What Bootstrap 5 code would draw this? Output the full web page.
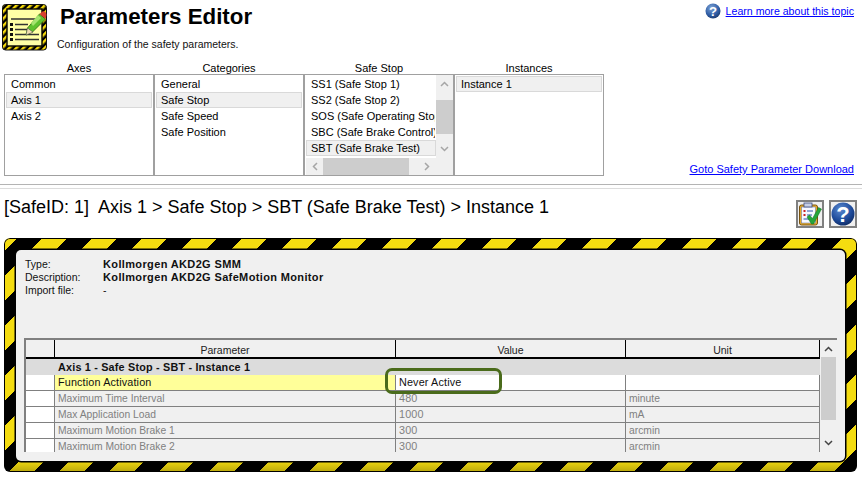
<!DOCTYPE html>
<html lang="en">
<head>
<meta charset="utf-8">
<title>Parameters Editor</title>
<link href="https://cdn.jsdelivr.net/npm/bootstrap@5.3.0/dist/css/bootstrap.min.css" rel="stylesheet">
<style>
html,body{margin:0;height:478px;overflow:hidden;background:#fff}
body{font-family:"Liberation Sans",Arial,sans-serif;font-size:11px;color:#000;line-height:16px}
.pg-top{height:61px;padding:4px 8px 0 2px}
.pg-logo{width:45px;height:47px;flex:none;display:block}
.pg-titles{margin-left:11px}
.pg-title{font-size:22.3px;font-weight:700;line-height:26px;margin:0 0 0 2px;letter-spacing:0}
.pg-sub{font-size:10.5px;line-height:13px;margin-top:8px;margin-left:-1px;color:#111}
.pg-head-link{margin-top:-1px}
.pg-learn{font-size:10.6px;line-height:14px;color:#00f;text-decoration:underline;margin-left:1px}
.lists-row{height:123px;padding:1px 8px 0 4px}
.lst-col{width:150px;flex:none}
.lst-cap{height:12px;line-height:12px;text-align:center;font-size:11px}
.lst-box{height:102px;border:1px solid #a0a0a0;background:#fff;padding:1px;position:relative;overflow:hidden;display:block;border-radius:0}
.lst-box .list-group-item{border:1px solid transparent;border-radius:0;padding:0 0 0 4px;height:16px;line-height:14px;font-size:11px;background:transparent;color:#000;white-space:nowrap;overflow:hidden;margin:0}
.lst-box .list-group-item+.list-group-item{border-top-width:1px;margin-top:0}
.lst-box .list-group-item.sel{background:#f0f0f0;border-color:#d9d9d9;color:#000;margin-top:0}
.lst-stop .list-group{width:130px}
.sb-v{position:absolute;right:0;top:0;bottom:17px;width:17px;background:#f0f0f0}
.sb-h{position:absolute;left:1px;right:17px;bottom:0;height:17px;background:#f0f0f0}
.sb-corner{position:absolute;right:0;bottom:0;width:17px;height:17px;background:#f0f0f0}
.sb-thumb{position:absolute;background:#cdcdcd}
.sb-arrow{position:absolute;display:block}
.goto-box{flex:1;align-self:flex-end;text-align:right;padding-bottom:7px}
.goto-lnk{font-size:11px;color:#00f;text-decoration:underline;line-height:16px}
.rule-a{height:5px;border-top:1px solid #b4b4b4;border-bottom:1px solid #dcdcdc;margin:0;opacity:1}
.crumb-row{height:49px;padding:8px 5px 0 4px}
.crumb{font-size:18px;line-height:20px;margin-top:0}
.sq-btn{width:28px;height:28px;border:2px solid #808080;background:#f0f0f0;padding:0;border-radius:0;margin-left:5px;display:flex;align-items:center;justify-content:center;margin-top:3px}
.haz{margin-left:4px;width:853px;height:234px;border-radius:6px;padding:12px 12px 11px 12px;position:relative;
 background-color:#000;
 background-image:linear-gradient(180deg,rgba(0,0,0,0) 222px,rgba(0,0,0,.22) 233px),repeating-linear-gradient(135deg,#f4dc10 0 9.5px,#000 9.5px 27.2px,#f4dc10 27.2px 35.36px);
 box-shadow:inset 0 0 0 1px #000}
.haz-in{height:211px;width:829px;background:#f0f0f0;border-radius:5px;padding:8px 8px 9px 8px;position:relative;box-shadow:0 0 0 1.5px #000}
.inf{height:80px;padding:0 0 0 1px;font-size:10.5px;line-height:13px;color:#111}
.inf-lab{width:78px;flex:none}
.inf-val{font-weight:700;font-size:11px;letter-spacing:.36px;color:#111}
.grid-wrap{height:114px;width:813px;border-top:2px solid #808080;border-left:2px solid #808080;position:relative;overflow:hidden;background:#f0f0f0}
.grid-tb{width:794px;table-layout:fixed;border-collapse:separate;border-spacing:0;margin:0;font-size:10.3px;line-height:14px;--bs-table-bg:transparent;--bs-table-color:inherit}
.grid-tb th,.grid-tb td{padding:0 3px;height:16px;border:0;white-space:nowrap;overflow:hidden;box-shadow:none;background:transparent}
.grid-tb thead th{font-weight:400;font-size:10.5px;height:19px;text-align:center;border-right:1px solid #000;border-bottom:2px solid #000;background:#f0f0f0;color:#222}
.grid-tb .r-h{background:#fff;border-right:1px solid #808080;border-bottom:1px solid #808080;padding:0}
.grid-tb td{border-right:1px solid #808080;border-bottom:1px solid #808080;color:#808080;vertical-align:bottom;line-height:15px}
.grid-tb td.num-v{font-size:10.8px;letter-spacing:.15px}
.grid-tb tr.grp td,.grid-tb tr.grp .r-h{background:#dcdcdc;border-right:0;border-bottom:0;color:#111;font-weight:700;height:16px;font-size:10.8px;letter-spacing:.2px}
.grid-tb tr.act td{color:#111;background:#fff;font-size:10.8px;letter-spacing:.15px}
.grid-tb tr.act td.yel{background:#ffff99}
.grid-sb{position:absolute;right:0;top:0;bottom:0;width:17px;background:#f0f0f0}
.mark-ring{position:absolute;left:385px;top:368px;width:117px;height:26px;border:3px solid #4a6b1b;border-radius:7px;pointer-events:none}
</style>
</head>
<body>
<header class="pg-top d-flex align-items-start">
  <svg class="pg-logo" viewBox="0 0 45 47">
    <defs><pattern id="hz" width="5" height="5" patternUnits="userSpaceOnUse" patternTransform="rotate(45)"><rect width="5" height="5" fill="#000"/><rect width="2.500" height="5" fill="#f5d90a"/></pattern></defs>
    <rect x=".5" y=".5" width="44" height="45.5" rx="3" fill="url(#hz)" stroke="#111"/>
    <rect x="5" y="5" width="35" height="37" fill="#ffffa6" stroke="#000" stroke-width="1.4"/>
    <g fill="#111"><rect x="8" y="19" width="3" height="3"/><rect x="8" y="24" width="3" height="3"/><rect x="8" y="29" width="3" height="3"/><rect x="8" y="34" width="3" height="3"/></g>
    <g stroke="#333" stroke-width="1.5"><path d="M9 15H36M13 20.500H26M13 25.500H30M13 30.500H37M13 35.500H37"/></g>
    <path d="M24 31l1.500-7 12-14 6 5-13 13z" fill="#5fc22e" stroke="#2d6a12" stroke-width=".8"/>
    <path d="M29 19l7-8 3 3-8 8z" fill="#a6e36f"/>
    <path d="M37.500 10l3-2.500c1.500-.8 4 1 4 3.500l-1 4z" fill="#d8402e"/>
    <path d="M24 31l1.500-7 5.500 4.200z" fill="#f0dcb0" stroke="#444" stroke-width=".5"/>
  </svg>
  <div class="pg-titles">
    <h1 class="pg-title">Parameters Editor</h1>
    <div class="pg-sub">Configuration of the safety parameters.</div>
  </div>
  <div class="ms-auto d-flex align-items-center gap-1 pg-head-link">
    <svg width="16" height="16" viewBox="0 0 17 17"><defs><radialGradient id="qb" cx=".4" cy=".3" r=".8"><stop offset="0" stop-color="#7fa4d6"/><stop offset=".6" stop-color="#2f5da5"/><stop offset="1" stop-color="#16315f"/></radialGradient></defs><circle cx="8.500" cy="8.500" r="8" fill="url(#qb)"/><text x="8.500" y="13.500" text-anchor="middle" font-family="Liberation Sans" font-weight="700" font-size="14" fill="#fff">?</text></svg>
    <a class="pg-learn" href="#">Learn more about this topic</a>
  </div>
</header>

<section class="lists-row d-flex">
  <div class="lst-col">
    <div class="lst-cap">Axes</div>
    <div class="lst-box"><div class="list-group"><div class="list-group-item">Common</div><div class="list-group-item sel">Axis 1</div><div class="list-group-item">Axis 2</div></div></div>
  </div>
  <div class="lst-col">
    <div class="lst-cap">Categories</div>
    <div class="lst-box"><div class="list-group"><div class="list-group-item">General</div><div class="list-group-item sel">Safe Stop</div><div class="list-group-item">Safe Speed</div><div class="list-group-item">Safe Position</div></div></div>
  </div>
  <div class="lst-col">
    <div class="lst-cap">Safe Stop</div>
    <div class="lst-box lst-stop">
      <div class="list-group"><div class="list-group-item">SS1 (Safe Stop 1)</div><div class="list-group-item">SS2 (Safe Stop 2)</div><div class="list-group-item">SOS (Safe Operating Stop)</div><div class="list-group-item">SBC (Safe Brake Control)</div><div class="list-group-item sel">SBT (Safe Brake Test)</div></div>
      <div class="sb-v"><div class="sb-thumb" style="left:0;right:0;top:25px;height:34px"></div>
        <svg class="sb-arrow" style="left:4px;top:6px" width="9" height="6" viewBox="0 0 9 6"><path d="M1 5l3.500-3.500L8 5" fill="none" stroke="#a6a6a6" stroke-width="1.500"/></svg>
        <svg class="sb-arrow" style="left:4px;bottom:6px" width="9" height="6" viewBox="0 0 9 6"><path d="M1 1l3.500 3.500L8 1" fill="none" stroke="#a6a6a6" stroke-width="1.500"/></svg></div>
      <div class="sb-h"><div class="sb-thumb" style="left:17px;width:86px;top:0;bottom:0"></div>
        <svg class="sb-arrow" style="left:6px;top:4px" width="6" height="9" viewBox="0 0 6 9"><path d="M5 1L1.500 4.500 5 8" fill="none" stroke="#a6a6a6" stroke-width="1.500"/></svg>
        <svg class="sb-arrow" style="right:6px;top:4px" width="6" height="9" viewBox="0 0 6 9"><path d="M1 1l3.500 3.500L1 8" fill="none" stroke="#a6a6a6" stroke-width="1.500"/></svg></div>
      <div class="sb-corner"></div>
    </div>
  </div>
  <div class="lst-col">
    <div class="lst-cap">Instances</div>
    <div class="lst-box"><div class="list-group"><div class="list-group-item sel">Instance 1</div></div></div>
  </div>
  <div class="goto-box"><a class="goto-lnk" href="#">Goto Safety Parameter Download</a></div>
</section>

<div class="rule-a"></div>

<section class="crumb-row d-flex align-items-start">
  <div class="crumb flex-grow-1">[SafeID: 1]&nbsp; Axis 1 &gt; Safe Stop &gt; SBT (Safe Brake Test) &gt; Instance 1</div>
  <button class="sq-btn" type="button" aria-label="Check"><svg width="24" height="24" viewBox="0 0 24 24"><rect x="1.500" y="3" width="18" height="20" rx="2" fill="#e8ad2a" stroke="#7a5410"/><rect x="3.500" y="5" width="14" height="16" fill="#f8f8ff" stroke="#5a6ea0" stroke-width=".5"/><rect x="6" y="1" width="8" height="4" fill="#c7cfe4" stroke="#3c4c7e" stroke-width=".8"/><g fill="#c22"><rect x="5.500" y="8" width="2" height="2"/><rect x="5.500" y="12" width="2" height="2"/></g><path d="M9 9h6M9 13h5M5.500 17h6" stroke="#2a55aa" stroke-width="1.200"/><path d="M9 15l2.500-2 3 3.500 6-11 3 1.500-8 15h-2z" fill="#25a53a" stroke="#127025" stroke-width=".5"/></svg></button>
  <button class="sq-btn" type="button" aria-label="Help"><svg width="24" height="24" viewBox="0 0 24 24"><defs><radialGradient id="qb2" cx=".4" cy=".3" r=".8"><stop offset="0" stop-color="#5c8ad0"/><stop offset=".6" stop-color="#1d4a9a"/><stop offset="1" stop-color="#0c2558"/></radialGradient></defs><circle cx="12" cy="12" r="11.500" fill="url(#qb2)"/><text x="12" y="20" text-anchor="middle" font-family="Liberation Sans" font-weight="700" font-size="22" fill="#fff">?</text></svg></button>
</section>

<section class="haz">
  <div class="haz-in">
    <div class="inf">
      <div class="d-flex"><div class="inf-lab">Type:</div><div class="inf-val">Kollmorgen AKD2G SMM</div></div>
      <div class="d-flex"><div class="inf-lab">Description:</div><div class="inf-val">Kollmorgen AKD2G SafeMotion Monitor</div></div>
      <div class="d-flex"><div class="inf-lab">Import file:</div><div>-</div></div>
    </div>
    <div class="grid-wrap">
      <table class="table grid-tb">
        <colgroup><col style="width:29px"><col style="width:341px"><col style="width:230px"><col style="width:194px"></colgroup>
        <thead><tr><th></th><th>Parameter</th><th>Value</th><th>Unit</th></tr></thead>
        <tbody>
          <tr class="grp"><td class="r-h"></td><td>Axis 1 - Safe Stop - SBT - Instance 1</td><td></td><td></td></tr>
          <tr class="act"><td class="r-h"></td><td class="yel">Function Activation</td><td>Never Active</td><td></td></tr>
          <tr><td class="r-h"></td><td>Maximum Time Interval</td><td class="num-v">480</td><td>minute</td></tr>
          <tr><td class="r-h"></td><td>Max Application Load</td><td class="num-v">1000</td><td>mA</td></tr>
          <tr><td class="r-h"></td><td>Maximum Motion Brake 1</td><td class="num-v">300</td><td>arcmin</td></tr>
          <tr><td class="r-h"></td><td>Maximum Motion Brake 2</td><td class="num-v">300</td><td>arcmin</td></tr>
        </tbody>
      </table>
      <div class="grid-sb"><div class="sb-thumb" style="left:1px;right:1px;top:17px;height:63px"></div>
        <svg class="sb-arrow" style="left:4px;top:6px" width="9" height="6" viewBox="0 0 9 6"><path d="M1 5l3.500-3.500L8 5" fill="none" stroke="#444" stroke-width="1.500"/></svg>
        <svg class="sb-arrow" style="left:4px;bottom:6px" width="9" height="6" viewBox="0 0 9 6"><path d="M1 1l3.500 3.500L8 1" fill="none" stroke="#444" stroke-width="1.500"/></svg></div>
    </div>
  </div>
</section>
<div class="mark-ring"></div>
<script src="https://cdn.jsdelivr.net/npm/bootstrap@5.3.0/dist/js/bootstrap.bundle.min.js"></script>
</body>
</html>
